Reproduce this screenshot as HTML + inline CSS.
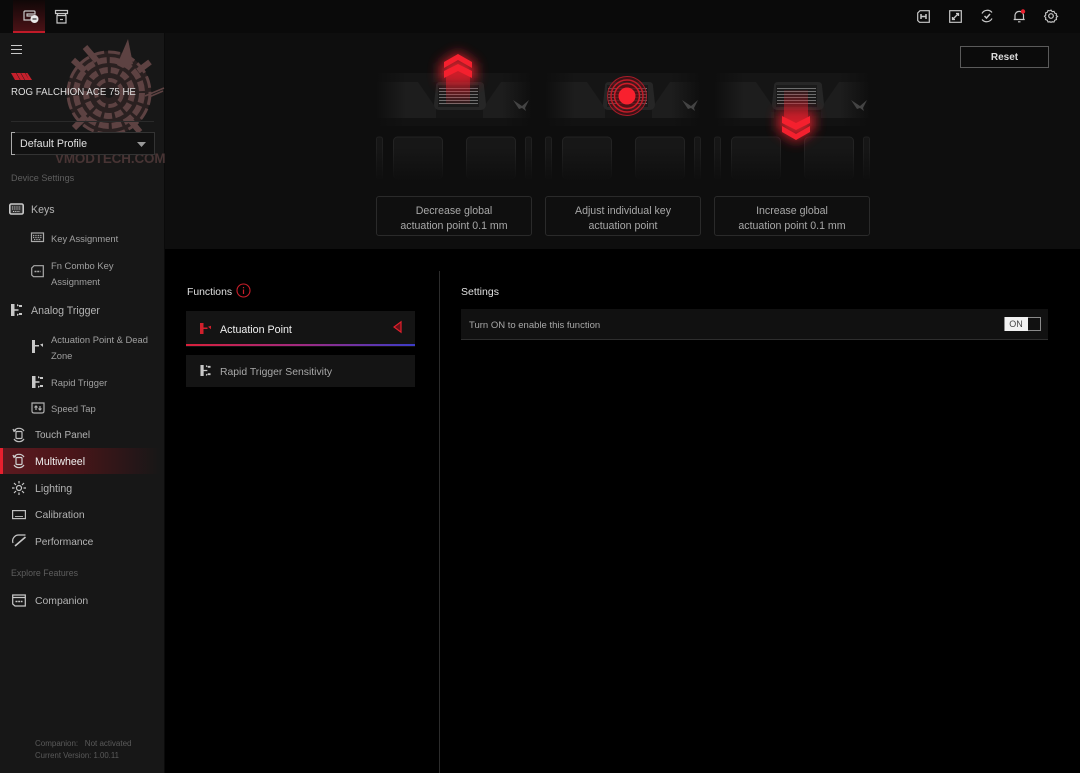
<!DOCTYPE html>
<html><head><meta charset="utf-8"><style>
html,body{margin:0;padding:0;background:#000}
#p{position:relative;width:1080px;height:773px;overflow:hidden;background:#000;font-family:"Liberation Sans",sans-serif}
.t{position:absolute;white-space:nowrap;font-size:10.600px;line-height:16px;color:#b4b4b4;margin-top:1px}
.s{font-size:9.400px;color:#a0a0a0}
.h{font-size:9.100px;color:#5e5e5e}
.a{position:absolute}
.box{position:absolute;top:196px;width:154px;height:38px;border:1px solid #2a2a2a;border-radius:3px;background:#0f0f0f;text-align:center;font-size:10.600px;line-height:15px;color:#a8a8a8}
.box div{margin-top:6.500px}
svg{position:absolute;overflow:visible}
svg.i{fill:none;stroke:#c8c8c8;stroke-width:1.200}
</style></head><body><div id="p">
<!-- backgrounds -->
<div class="a" style="left:165px;top:33px;width:915px;height:216px;background:#0e0e0e"></div>
<div class="a" style="left:0;top:0;width:1080px;height:33px;background:#0a0a0a"></div>
<div class="a" style="left:0;top:33px;width:164px;height:740px;background:#171717"></div>
<div class="a" style="left:164px;top:33px;width:1px;height:740px;background:#0a0a0a"></div>
<!-- active tab -->
<div class="a" style="left:13px;top:0;width:32px;height:31px;background:linear-gradient(#0f0707,#4a1216);border-bottom:2px solid #c01a28"></div>
<svg class="i" style="left:22px;top:9px" width="18" height="16" viewBox="0 0 18 16"><path d="M2 9V3q0-1 1-1h9q1 0 1 1v2H5v2h6M2 9v2h7"/><circle cx="12.500" cy="10" r="4" fill="#e8e8e8" stroke="none"/><path d="M10.500 10h4" stroke="#333"/></svg>
<svg class="i" style="left:54px;top:9px" width="15" height="16" viewBox="0 0 15 16"><path d="M1.500 1.500h12v3h-12zM3 4.500l1 2M12 4.500l-1 2M3 6.500h9v7.500H3z"/><path d="M6 10.500h3"/></svg>
<!-- top right icons -->
<svg class="i" style="left:917px;top:10px" width="13" height="13" viewBox="0 0 13 13"><path d="M3 .7h9.300v11.600H2.500L.7 10.500V3z"/><path d="M4 4v5M9 4v5M4 6.500h5" stroke-width="1.500"/></svg>
<svg class="i" style="left:949px;top:10px" width="13" height="13" viewBox="0 0 13 13"><path d="M.7.700h11.600v11.600H.7z"/><path d="M3.500 9.500l6-6M7 3.500h2.500V6M3.500 7v2.500H6" stroke-width="1.300"/></svg>
<svg class="i" style="left:980px;top:9px" width="14" height="14" viewBox="0 0 14 14"><path d="M2 4.500A6 6 0 0 1 12 3.500M12 9.500A6 6 0 0 1 2 10.500"/><path d="M4.500 7l2 2 3.500-4" stroke-width="1.500"/></svg>
<svg class="i" style="left:1013px;top:9px" width="13" height="14" viewBox="0 0 13 14"><path d="M2 10.500V6a4.300 4.300 0 0 1 8.500 0v4.500zM.7 10.500h11M5 12.800h2.500"/><circle cx="10" cy="2.500" r="2.200" fill="#e8202e" stroke="none"/></svg>
<svg class="i" style="left:1044px;top:9px" width="14" height="14" viewBox="0 0 14 14"><path d="M7 .8l1.200 1.700 2-.3.800 1.900 1.900.8-.3 2L14 7.500 12.600 9l.3 2-1.900.8-.8 1.900-2-.3L7 14l-1.200-.6-2 .3-.8-1.900-1.900-.8.300-2L0 7.500 1.400 6l-.3-2L3 3.200l.8-1.900 2 .3z" transform="translate(.5 .3) scale(.93)"/><circle cx="7" cy="7" r="2.300"/></svg>
<!-- watermark -->
<svg style="left:60px;top:30px" width="110" height="125" viewBox="60 30 110 125" fill="none">
<circle cx="109" cy="93" r="42" fill="#2a2020"/>
<g stroke="#5d4242">
<circle cx="109" cy="93" r="13" stroke-width="4" stroke-dasharray="9 3"/>
<circle cx="109" cy="93" r="23" stroke-width="6" stroke-dasharray="8 3"/>
<circle cx="109" cy="93" r="33" stroke-width="6" stroke-dasharray="10 3"/>
<circle cx="109" cy="93" r="41" stroke-width="3" stroke-dasharray="12 4"/>
<path d="M109 135V148" stroke-width="11"/>
<path d="M85 47l12 14" stroke-width="6"/>
<path d="M73 60l12 11M140 132l-10-12M74 128l12-12M150 62l-12 9" stroke-width="6"/>
<path d="M145 96l19-8M149 97l14-6" stroke-width="1.500"/>
</g>
<path d="M128 39l5 25-10 4-6-3z" fill="#5d4242"/>
<circle cx="109" cy="93" r="5" fill="#171717"/></svg>
<div class="t" style="left:55px;top:150px;font-size:13.400px;font-weight:bold;color:#483434;letter-spacing:-.1px">VMODTECH.COM</div>
<!-- sidebar top -->
<svg style="left:11px;top:45px" width="12" height="9"><path d="M0 .5h11M0 4.500h11M0 8.500h11" stroke="#c8c8c8"/></svg>
<svg style="left:11px;top:73px" width="21" height="7"><path d="M0 0h5l4 7H4zM5.500 0h4l4 7h-4zM10 0h4l4 7h-4zM14.500 0h2L21 7h-3z" fill="#c5202c"/></svg>
<div class="t" style="left:11px;top:84px;color:#dedede;font-size:9.700px">ROG FALCHION ACE 75 HE</div>
<div class="a" style="left:11px;top:121px;width:143px;height:1px;background:#2a2a2a"></div>
<div class="a" style="left:11px;top:132px;width:142px;height:21px;border:1px solid #333;background:#111"></div>
<div class="a" style="left:11px;top:132px;width:3px;height:21px;border:solid #aaa;border-width:1px 0 1px 1px"></div>
<div class="t" style="left:20px;top:135px;color:#e0e0e0;font-size:10.700px">Default Profile</div>
<svg style="left:137px;top:142px" width="9" height="6"><path d="M0 0h9L4.500 5z" fill="#999"/></svg>
<div class="t h" style="left:11px;top:169px">Device Settings</div>
<!-- sidebar items -->
<svg class="i" style="left:9px;top:203px;stroke-width:1.600" width="15" height="12" viewBox="0 0 15 12"><rect x=".8" y="1" width="13.400" height="10" rx="1.500" fill="#333"/><path d="M3 4h9M3 6h9M4 8.500h7" stroke-dasharray="1 .8" stroke-width="1"/></svg>
<div class="t" style="left:31px;top:201px">Keys</div>
<svg class="i" style="left:31px;top:232px;stroke:#aaa" width="13" height="11" viewBox="0 0 13 11"><rect x=".5" y="1" width="12" height="8.500"/><path d="M2 3.500h9M2 5.500h9M3 7.500h7" stroke-dasharray="1 .7"/></svg>
<div class="t s" style="left:51px;top:230px">Key Assignment</div>
<svg class="i" style="left:31px;top:265px;stroke:#aaa" width="13" height="13" viewBox="0 0 13 13"><path d="M3 .7h9.300v11H2.500L.7 10V3z"/><path d="M3.500 6.500h6" stroke-width="1.500" stroke-dasharray="2 .7"/></svg>
<div class="t s" style="left:51px;top:257px">Fn Combo Key</div>
<div class="t s" style="left:51px;top:273px">Assignment</div>
<svg style="left:11px;top:304px" width="11" height="12" viewBox="0 0 11 12" fill="#c8c8c8"><path d="M0 0h3.500v12H0zM6 0l2 1.200L6 2.500zM6 9.500l2 1.200L6 12zM8 1h3v2H8zM8 9h3v2H8zM3.500 5.300h4v1.400h-4z"/></svg>
<div class="t" style="left:31px;top:302px">Analog Trigger</div>
<svg style="left:32px;top:340px" width="11" height="13" viewBox="0 0 11 13" fill="#c8c8c8"><path d="M0 0h3v13H0zM3 5h4v1.500H3zM8 4.500l3-1v3.500z"/></svg>
<div class="t s" style="left:51px;top:331px">Actuation Point &amp; Dead</div>
<div class="t s" style="left:51px;top:347px">Zone</div>
<svg style="left:32px;top:376px" width="11" height="12" viewBox="0 0 11 12" fill="#c8c8c8"><path d="M0 0h3.500v12H0zM6 0l2 1.200L6 2.500zM6 9.500l2 1.200L6 12zM8 1h3v2H8zM8 9h3v2H8zM3.500 5.300h4v1.400h-4z"/></svg>
<div class="t s" style="left:51px;top:374px">Rapid Trigger</div>
<svg class="i" style="left:31px;top:402px;stroke:#b0b0b0" width="14" height="12" viewBox="0 0 14 12"><path d="M1 9V1h12v8M1 9q0 2 2 2h8q2 0 2-2"/><path d="M5 4v4M3.500 5.500L5 4l1.500 1.500M9 8V4M7.500 6.500L9 8l1.500-1.500"/></svg>
<div class="t s" style="left:51px;top:400px">Speed Tap</div>
<svg class="i" style="left:12px;top:428px;stroke:#c0c0c0" width="14" height="14" viewBox="0 0 14 14"><rect x="4" y="3.500" width="6" height="7" rx="1"/><path d="M2 3A6 6 0 0 1 12 3M12 11A6 6 0 0 1 2 11M1 1l1 2.300L4 2.500"/></svg>
<div class="t" style="left:35px;top:427px;font-size:10px">Touch Panel</div>
<div class="a" style="left:0;top:448px;width:160px;height:26px;background:linear-gradient(90deg,#5c1a20,#4a1519 45%,#171717)"></div>
<div class="a" style="left:0;top:448px;width:3px;height:26px;background:#e8202e"></div>
<svg class="i" style="left:12px;top:454px;stroke:#d0d0d0" width="14" height="14" viewBox="0 0 14 14"><rect x="4" y="3.500" width="6" height="7" rx="1"/><path d="M2 3A6 6 0 0 1 12 3M12 11A6 6 0 0 1 2 11M1 1l1 2.300L4 2.500"/></svg>
<div class="t" style="left:35px;top:453px;color:#f0f0f0">Multiwheel</div>
<svg class="i" style="left:12px;top:481px;stroke:#c8c8c8" width="14" height="14" viewBox="0 0 14 14"><circle cx="7" cy="7" r="2.500"/><path d="M7 0v2.500M7 11.500V14M0 7h2.500M11.500 7H14M2 2l2 2M10 10l2 2M12 2l-2 2M4 10l-2 2"/></svg>
<div class="t" style="left:35px;top:480px">Lighting</div>
<svg class="i" style="left:12px;top:510px;stroke:#c0c0c0" width="14" height="10" viewBox="0 0 14 10"><rect x=".6" y=".6" width="12.800" height="8"/><path d="M3 6.500h8" stroke-width=".9"/></svg>
<div class="t" style="left:35px;top:507px;font-size:10.400px">Calibration</div>
<svg class="i" style="left:12px;top:534px;stroke:#c8c8c8" width="14" height="13" viewBox="0 0 14 13"><path d="M1 9A6 6 0 0 1 7 1h6.500"/><path d="M3 12L13.500 3" stroke-width="1.600"/></svg>
<div class="t" style="left:35px;top:534px;font-size:10.200px">Performance</div>
<div class="t h" style="left:11px;top:564px;font-size:8.800px">Explore Features</div>
<svg class="i" style="left:12px;top:594px;stroke:#c8c8c8" width="14" height="13" viewBox="0 0 14 13"><path d="M.7 1h12.600v11H3L.7 10zM1 3.500h12"/><path d="M3.500 7.500h7" stroke-width="1.500" stroke-dasharray="2 .7"/></svg>
<div class="t" style="left:35px;top:593px;font-size:10.400px">Companion</div>
<div class="t" style="left:35px;top:737px;font-size:8px;line-height:11px;color:#5a5a5a">Companion:&nbsp;&nbsp; Not activated</div>
<div class="t" style="left:35px;top:749px;font-size:7.800px;line-height:11px;color:#5a5a5a">Current Version: 1.00.11</div>
<!-- Reset -->
<div class="a" style="left:960px;top:46px;width:87px;height:20px;border:1px solid #5a5a5a;background:#0b0b0b;text-align:center;line-height:22px;font-size:10px;font-weight:bold;color:#dcdcdc">Reset</div>
<!-- illustrations -->
<svg style="left:0;top:0" width="1080" height="250" viewBox="0 0 1080 250">
<defs>
<linearGradient id="fl" x1="0" x2="1" y1="0" y2="0"><stop offset="0" stop-color="#0e0e0e"/><stop offset="1" stop-color="#0e0e0e" stop-opacity="0"/></linearGradient>
<linearGradient id="fr" x1="1" x2="0" y1="0" y2="0"><stop offset="0" stop-color="#0e0e0e"/><stop offset="1" stop-color="#0e0e0e" stop-opacity="0"/></linearGradient>
<linearGradient id="fb" x1="0" y1="0" x2="0" y2="1"><stop offset="0" stop-color="#0e0e0e" stop-opacity="0"/><stop offset="1" stop-color="#0e0e0e"/></linearGradient>
<linearGradient id="ru" x1="0" y1="0" x2="0" y2="1"><stop offset="0" stop-color="#d01c28" stop-opacity=".8"/><stop offset="1" stop-color="#e8202e" stop-opacity=".1"/></linearGradient>
<filter id="b" x="-80%" y="-80%" width="260%" height="260%"><feGaussianBlur stdDeviation="6"/></filter>
<g id="kb">
<rect x="0" y="73" width="156" height="53" fill="#151515"/>
<path d="M0 82H42L60 108V118H0z" fill="#1d1d1d"/>
<path d="M156 118H107V108L125 82H156z" fill="#1d1d1d"/>
<rect x="0" y="118" width="156" height="8" fill="#121212"/>
<rect x="0" y="73" width="30" height="53" fill="url(#fl)"/>
<rect x="126" y="73" width="30" height="53" fill="url(#fr)"/>
<path d="M60 86q0-4 4-4h40q4 0 4 4l2 18q0 6-6 6H64q-6 0-6-6z" fill="#262626"/>
<rect x="62" y="85" width="41" height="22" fill="#1a1a1a"/>
<path d="M63 88.500h39M63 91.500h39M63 94.500h39M63 97.500h39M63 100.500h39M63 103.500h39" stroke="#6e6e6e"/>
<path d="M137 100l9 6 7-6-4 8 1 3-4-3-3 1z" fill="#444"/>
<rect x=".5" y="137" width="6" height="42" rx="2" fill="#161616" stroke="#202020"/>
<rect x="17.500" y="137" width="49" height="42" rx="4" fill="#171717" stroke="#232323"/>
<rect x="90.500" y="137" width="49" height="42" rx="4" fill="#171717" stroke="#232323"/>
<rect x="149.500" y="137" width="6" height="42" rx="2" fill="#161616" stroke="#202020"/>
<rect x="0" y="148" width="156" height="33" fill="url(#fb)"/>
</g>
<g id="ar">
<path d="M440 64l18-12 18 12v18h-36z" fill="#e8202e" filter="url(#b)" opacity=".85"/>
<rect x="446" y="71" width="24" height="33" fill="url(#ru)"/>
<path d="M444 62l14-8 14 8v6l-14-8-14 8z" fill="#f4202e"/>
<path d="M444 71l14-7 14 7v7l-14-7-14 7z" fill="#f4202e"/>
</g>
</defs>
<use href="#kb" x="376"/><use href="#kb" x="545"/><use href="#kb" x="714"/>
<use href="#ar"/>
<use href="#ar" transform="translate(338 194) scale(1 -1)"/>
<circle cx="627" cy="96" r="19.500" fill="#6a0f18" fill-opacity=".45" stroke="#a81c28"/>
<circle cx="627" cy="96" r="16" fill="none" stroke="#c01c28" stroke-width="1.500"/>
<circle cx="627" cy="96" r="12.500" fill="#5a0f16" fill-opacity=".7" stroke="#d01c28" stroke-width="1.500"/>
<circle cx="627" cy="96" r="8.500" fill="#f8202e"/>
</svg>
<div class="box" style="left:376px"><div>Decrease global<br>actuation point 0.1 mm</div></div>
<div class="box" style="left:545px"><div>Adjust individual key<br>actuation point</div></div>
<div class="box" style="left:714px"><div>Increase global<br>actuation point 0.1 mm</div></div>
<!-- functions -->
<div class="t" style="left:187px;top:284px;color:#e0e0e0;font-size:10.400px">Functions</div>
<svg style="left:236px;top:283px" width="15" height="15" viewBox="0 0 15 15"><circle cx="7.500" cy="7.500" r="6.500" fill="none" stroke="#c81e2a" stroke-width="1.100"/><path d="M7.500 4v1.300M7.500 6.500V11" stroke="#c81e2a" stroke-width="1.200"/></svg>
<div class="a" style="left:186px;top:311px;width:229px;height:36px;background:#141414"></div>
<div class="a" style="left:186px;top:344px;width:229px;height:2px;background:linear-gradient(90deg,#d8203a,#a02a80 50%,#3c3cc8)"></div>
<svg style="left:200px;top:323px" width="11" height="11" viewBox="0 0 11 11" fill="#d0202c"><path d="M0 0h3.500v11H0zM3.500 4.500h4v1.500h-4zM8 3.800l3-1v3.500z"/></svg>
<div class="t" style="left:220px;top:321px;color:#f0f0f0;font-size:10.700px">Actuation Point</div>
<svg style="left:393px;top:321px" width="9" height="12" viewBox="0 0 9 12"><path d="M8 .8L1 6l7 5.200z" fill="#6a1018" stroke="#e0202c" stroke-width="1.200"/></svg>
<div class="a" style="left:186px;top:355px;width:229px;height:32px;background:#141414"></div>
<svg style="left:200px;top:365px" width="11" height="11" viewBox="0 0 11 12" fill="#c8c8c8"><path d="M0 0h3.500v12H0zM6 0l2 1.200L6 2.500zM6 9.500l2 1.200L6 12zM8 1h3v2H8zM8 9h3v2H8zM3.500 5.300h4v1.400h-4z"/></svg>
<div class="t" style="left:220px;top:364px;color:#a8a8a8;font-size:10.400px">Rapid Trigger Sensitivity</div>
<div class="a" style="left:439px;top:271px;width:1px;height:502px;background:#2c2c2c"></div>
<!-- settings -->
<div class="t" style="left:461px;top:283px;color:#e0e0e0;font-size:10.500px">Settings</div>
<div class="a" style="left:461px;top:309px;width:587px;height:30px;background:#111;border-bottom:1px solid #2e2e2e"></div>
<div class="t" style="left:469px;top:317px;font-size:9.500px;color:#a8a8a8">Turn ON to enable this function</div>
<div class="a" style="left:1004px;top:317px;width:35px;height:12px;border:1px solid #8a8a8a;background:#111"></div>
<div class="a" style="left:1005px;top:317px;width:23px;height:14px;background:#f2f2f2;color:#444;font-size:9px;line-height:14px;text-align:center;text-indent:-1px">ON</div>
</div></body></html>
